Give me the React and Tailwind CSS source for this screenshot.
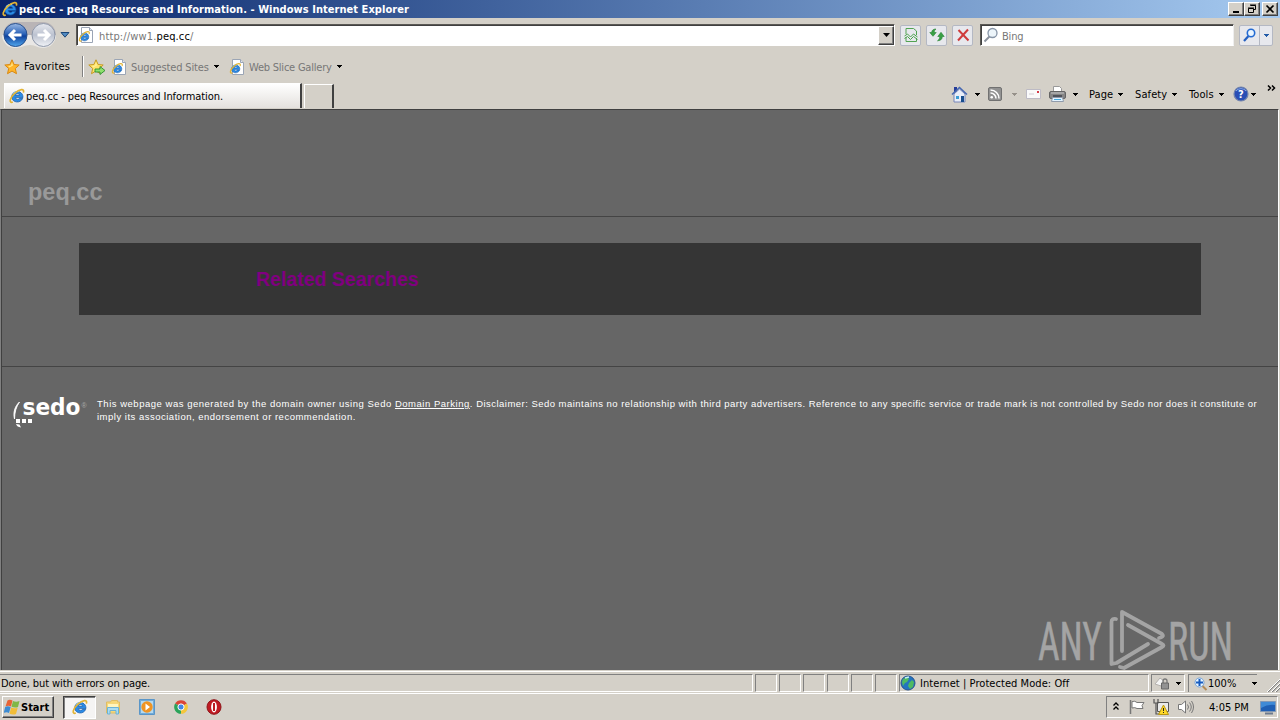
import clsx from "clsx";

const SUNKEN =
  "border border-t-[#808080] border-l-[#808080] border-b-white border-r-white";

function Caret({ className, color = "#000" }) {
  return (
    <svg
      className={clsx("h-[3px] w-[5px] shrink-0", className)}
      viewBox="0 0 5 3"
      shapeRendering="crispEdges"
    >
      <path d="M0 0h5v1H0zM1 1h3v1H1zM2 2h1v1H2z" fill={color} />
    </svg>
  );
}

function ExplorerMark() {
  return (
    <>
      <path
        d="M14 9.600H6.300c.3 2.200 3.300 2.300 4.300.7h3.100C11.800 15.800 2.800 15 2.800 8.800 2.800 1.700 14.300 1.500 14 9.600zM6.300 7.300h4.400c-.3-2.100-4-2.100-4.400 0z"
        fill="#2a8be6"
        stroke="#1457a6"
        strokeWidth=".7"
      />
      <path
        d="M4.200 6.200C5.200 4 8 3 10 3.600"
        fill="none"
        stroke="#8fd0fa"
        strokeWidth="1.200"
      />
      <path
        d="M3.800 14C-.3 15.600.6 9.800 5.600 5.300 10.500 1 16 .2 14.300 4.600"
        fill="none"
        stroke="#e2b436"
        strokeWidth="1.700"
      />
    </>
  );
}

function ExplorerIcon({ className }) {
  return (
    <svg className={clsx("shrink-0", className)} viewBox="0 0 16 16">
      <ExplorerMark />
    </svg>
  );
}

function ExplorerPage({ className }) {
  return (
    <svg
      className={clsx("h-4 w-4 shrink-0", className)}
      viewBox="0 0 16 16"
    >
      <path d="M3.500.5h8l3 3v12h-11z" fill="#fff" stroke="#9ba5b5" />
      <path d="M11.500.5v3h3" fill="#dfe5ef" stroke="#9ba5b5" />
      <g transform="translate(.5 3.500) scale(.74)">
        <ExplorerMark />
      </g>
    </svg>
  );
}

function Star({ add, className }) {
  return (
    <svg
      className={clsx("h-4 w-[18px] shrink-0", className)}
      viewBox="0 0 18 16"
    >
      <path
        d="M8 .8l2.100 4.700 5.100.5-3.900 3.500 1.200 5.200L8 12.100l-4.500 2.600 1.200-5.200L.8 6l5.100-.5z"
        fill={add ? "#ffe36b" : "#ffb52a"}
        stroke={add ? "#c69a23" : "#d98912"}
      />
      <path d="M8 3l1 3.500-3.500 2L4 7l3-.5z" fill="#fff2a0" opacity=".8" />
      {add && (
        <path
          d="M7 10h5V7.500l5 4-5 4V13H7z"
          fill="#8ee06c"
          stroke="#2e8f30"
          strokeWidth=".9"
        />
      )}
    </svg>
  );
}

function TravelButtons() {
  return (
    <svg className="h-[28px] w-[58px] shrink-0" viewBox="0 0 58 28">
      <defs>
        <linearGradient id="back" x2="0" y2="1">
          <stop stopColor="#9bb9e4" />
          <stop offset=".45" stopColor="#2c63b8" />
          <stop offset=".55" stopColor="#0f429d" />
          <stop offset="1" stopColor="#52a9ef" />
        </linearGradient>
        <linearGradient id="forward" x2="0" y2="1">
          <stop stopColor="#e6e8ee" />
          <stop offset=".5" stopColor="#bcc2d0" />
          <stop offset="1" stopColor="#f1f3f7" />
        </linearGradient>
      </defs>
      <path
        d="M14 1h29a13 13 0 0 1 12 13H2A13 13 0 0 1 14 1z"
        fill="#b9b4b6"
      />
      <path
        d="M1 14h54a13 13 0 0 1-13 13c-6 0-7-3-13-3s-8 3-15 3A13 13 0 0 1 1 14z"
        fill="#e9e7e5"
      />
      <circle cx="14.500" cy="14" r="11.500" fill="url(#back)" stroke="#274f8d" />
      <circle
        cx="42.500"
        cy="14"
        r="11.500"
        fill="url(#forward)"
        stroke="#8f98aa"
      />
      <path
        d="M8.500 14h12M14 9l-5 5 5 5"
        fill="none"
        stroke="#fff"
        strokeWidth="3"
      />
      <path
        d="M36.500 14h12M43 9l5 5-5 5"
        fill="none"
        stroke="#fff"
        strokeWidth="3"
      />
    </svg>
  );
}

function WindowButton({ children, className }) {
  return (
    <button
      type="button"
      className={clsx(
        "flex h-[14px] w-4 items-center justify-center border border-t-white border-l-white border-r-[#404040] border-b-[#404040] bg-[#d4d0c8] shadow-[inset_-1px_-1px_#808080]",
        className,
      )}
    >
      <svg
        className="h-3 w-3.5"
        viewBox="0 0 14 12"
        fill="none"
        stroke="#000"
      >
        {children}
      </svg>
    </button>
  );
}

function TitleBar() {
  return (
    <header className="flex h-[18px] items-center bg-linear-to-r from-[#0a246a] to-[#a6caf0] pl-[2px] pr-[2px]">
      <ExplorerIcon className="h-4 w-4" />
      <span className="ml-px mt-px w-[392px] text-[11px] font-bold tracking-[0.045px] text-white">
        peq.cc - peq Resources and Information. - Windows Internet Explorer
      </span>
      <div className="ml-auto flex">
        <WindowButton>
          <path d="M4 9h6" strokeWidth="2" />
        </WindowButton>
        <WindowButton>
          <path d="M5.500 2.500h5v4h-2M5 2h6M3.500 5.500h5v4h-5zM3 5h6" />
        </WindowButton>
        <WindowButton className="ml-[2px]">
          <path d="M3.500 2.500l7 7M10.500 2.500l-7 7" strokeWidth="1.700" />
        </WindowButton>
      </div>
    </header>
  );
}

function ToolButton({ children, className }) {
  return (
    <button
      type="button"
      className={clsx(
        "flex h-[21px] w-[21px] items-center justify-center rounded-[2px] border border-[#b4b8c3] bg-[#e7e8ed]",
        className,
      )}
    >
      <svg className="h-4 w-4" viewBox="0 0 16 16" fill="none">
        {children}
      </svg>
    </button>
  );
}

function AddressRow() {
  return (
    <div className="flex h-[34px] items-center pl-[1px]">
      <TravelButtons />
      <svg className="ml-[1px] h-[6px] w-[10px] shrink-0" viewBox="0 0 10 6">
        <path d="M1 .5h8l-4 4.700z" fill="#518bc2" stroke="#1d4778" />
      </svg>
      <div className="ml-[6px] flex h-[22px] w-[819px] items-center border border-t-[#5b5955] border-l-[#5b5955] border-b-white border-r-white bg-white shadow-[inset_1px_1px_#404040]">
        <ExplorerPage className="ml-px" />
        <span className="mt-[3px] ml-[5px] text-[11px] tracking-[0.14px] text-[#777]">
          http://ww1.<span className="text-black">peq.cc</span>/
        </span>
        <button
          type="button"
          className="ml-auto flex h-[19px] w-4 items-center justify-center border border-t-white border-l-white border-r-[#404040] border-b-[#404040] bg-[#d4d0c8] shadow-[inset_-1px_-1px_#808080]"
        >
          <svg className="h-[4px] w-[7px]" viewBox="0 0 7 4">
            <path d="M0 0h7L3.500 4z" />
          </svg>
        </button>
      </div>
      <ToolButton className="ml-[5px]">
        <path d="M3 7V1.500h7.500L13.500 4v4M3 10v4.500h10.500V11" stroke="#52a352" />
        <path
          d="M1.500 9l3-2 3 3 3-3 4 3M1.500 11.500l3-2 3 3 3-3 4 3"
          stroke="#49a24a"
        />
      </ToolButton>
      <ToolButton className="ml-[5px]">
        <path
          d="M.8 5.500L4 9.300l3.200-3.800H5.300C5.200 4 5.700 3 7 2 4.200 2 2.700 3.300 2.700 5.500zM15.200 9.500L12 5.300 8.800 9.500h1.900c0 2-.5 3-2.200 4.300 3.500-.2 4.800-1.800 4.800-4.300z"
          fill="#39a045"
          stroke="#24812f"
          strokeWidth=".6"
        />
      </ToolButton>
      <ToolButton className="ml-[5px]">
        <path
          d="M3.500 3l10 10.500M13 2.500L3 13.500"
          stroke="#cf3b3b"
          strokeWidth="2"
        />
      </ToolButton>
      <div className="ml-[7px] flex h-[22px] w-[254px] items-center border border-t-[#5b5955] border-l-[#5b5955] border-b-white border-r-[#eee] bg-white shadow-[inset_1px_1px_#404040]">
        <svg className="ml-[2px] h-4 w-4" viewBox="0 0 16 16" fill="none">
          <path d="M6.500 9.500l-5 5" stroke="#8b929d" strokeWidth="2" />
          <circle
            cx="9.500"
            cy="6"
            r="4.500"
            fill="#edf5fa"
            stroke="#8795a7"
            strokeWidth="1.300"
          />
        </svg>
        <span className="mt-[3px] ml-[3px] text-[11px] tracking-[-0.2px] text-[#777]">
          Bing
        </span>
      </div>
      <button
        type="button"
        className="ml-[5px] flex h-[21px] w-[34px] items-center rounded-[2px] border border-[#b4b8c3] bg-[#e7e8ed]"
      >
        <svg className="ml-[2px] h-4 w-4" viewBox="0 0 16 16" fill="none">
          <path d="M6.500 9l-4.500 5" stroke="#245fc0" strokeWidth="2.200" />
          <circle
            cx="9"
            cy="6"
            r="3.700"
            fill="#eaf5ff"
            stroke="#246bd3"
            strokeWidth="1.600"
          />
        </svg>
        <span className="ml-[1px] h-full w-px bg-[#b4b8c3]" />
        <Caret className="ml-[4px]" color="#235ba8" />
      </button>
    </div>
  );
}

function FavoritesRow() {
  return (
    <div className="flex h-[29px] items-center pl-[4px] text-[11px]">
      <Star />
      <span className="ml-[2px] w-[54px] shrink-0 tracking-[0.16px]">
        Favorites
      </span>
      <span className="ml-[4px] h-[21px] w-[2px] shrink-0 border-l border-l-[#808080] bg-white" />
      <Star add className="ml-[4px]" />
      <ExplorerPage className="ml-[5px]" />
      <span className="mt-[2px] ml-[4px] w-[79px] shrink-0 tracking-[-0.15px] text-[#777]">
        Suggested Sites
      </span>
      <Caret className="ml-[4px]" />
      <ExplorerPage className="ml-[10px]" />
      <span className="mt-[2px] ml-[4px] w-[84px] shrink-0 tracking-[-0.22px] text-[#777]">
        Web Slice Gallery
      </span>
      <Caret className="ml-[4px]" />
    </div>
  );
}

function CommandBar() {
  return (
    <div className="ml-auto flex h-[26px] items-center pr-[4px] text-[11px]">
      <svg className="h-[17px] w-[17px]" viewBox="0 0 17 17">
        <path d="M3 1h3v5H3z" fill="#263c99" />
        <path d="M3 8l5.500-5L14 8v8H3z" fill="#e9eef9" stroke="#7685b8" />
        <path
          d="M1 8.500l7.500-7 7.500 7"
          fill="none"
          stroke="#4467b2"
          strokeWidth="1.500"
        />
        <path d="M10 10h3v6h-3z" fill="#174d8d" />
        <path d="M5 10h3v3H5z" fill="#3b9ed5" />
      </svg>
      <Caret className="ml-[7px]" />
      <svg
        className="ml-[8px] h-[14px] w-[14px]"
        viewBox="0 0 14 14"
        fill="none"
      >
        <rect
          x=".5"
          y=".5"
          width="13"
          height="13"
          rx="1.500"
          fill="#929292"
          stroke="#717171"
        />
        <circle cx="3.700" cy="10.300" r="1.300" fill="#fff" />
        <path
          d="M2.500 6a5.500 5.500 0 0 1 5.500 5.500M2.500 3a8.500 8.500 0 0 1 8.500 8.500"
          stroke="#fff"
          strokeWidth="1.500"
        />
      </svg>
      <Caret className="ml-[10px]" color="#96918a" />
      <svg className="ml-[9px] h-[10px] w-[15px]" viewBox="0 0 15 10">
        <path d="M.5.5h14v9H.5z" fill="#fafafa" stroke="#bdbbc5" />
        <path d="M11 2h2v2h-2z" fill="#d53b48" />
        <path d="M3 5h5" stroke="#d0cad1" />
      </svg>
      <svg className="ml-[8px] h-4 w-[17px]" viewBox="0 0 17 16">
        <path d="M4.500 7V.5h6l2 2V7" fill="#fff" stroke="#999" />
        <rect
          x=".5"
          y="5.500"
          width="16"
          height="7"
          rx="1.500"
          fill="#858585"
          stroke="#646464"
        />
        <path d="M2 7h13" stroke="#c8c8c8" />
        <path d="M4 9h9v4H4z" fill="#50535a" />
        <path d="M3.500 11.500h10l1 4h-12z" fill="#e3f3ff" stroke="#909bab" />
        <path d="M5 13.500h7" stroke="#45a9dc" />
      </svg>
      <Caret className="ml-[7px]" />
      <span className="mt-[2px] ml-[11px] w-[25px] tracking-[0.1px]">Page</span>
      <Caret className="ml-[4px]" />
      <span className="mt-[2px] ml-[12px] w-[33px] tracking-[0.1px]">
        Safety
      </span>
      <Caret className="ml-[4px]" />
      <span className="mt-[2px] ml-[12px] w-[27px] tracking-[0.1px]">
        Tools
      </span>
      <Caret className="ml-[3px]" />
      <svg className="ml-[9px] h-4 w-4" viewBox="0 0 16 16">
        <circle
          cx="8"
          cy="8"
          r="7"
          fill="#294eb5"
          stroke="#7384ac"
          strokeWidth="1.200"
        />
        <path d="M3 5a5.500 4 0 0 1 10 0" fill="none" stroke="#8cade7" />
        <text x="5" y="12.300" fill="#fff" fontSize="11" fontWeight="bold">
          ?
        </text>
      </svg>
      <Caret className="ml-[2px]" />
      <svg
        className="-mt-[13px] ml-[11px] h-[6px] w-[9px]"
        viewBox="0 0 9 6"
        fill="none"
        stroke="#000"
        strokeWidth="1.500"
      >
        <path d="M1 .5L3.500 3 1 5.500M5 .5L7.500 3 5 5.500" />
      </svg>
    </div>
  );
}

function TabRow() {
  return (
    <div className="flex h-[28px] items-start pl-[4px]">
      <div className="mt-[2px] flex h-[25px] w-[298px] items-center border-r-2 border-r-[#404040] border-t border-t-white border-l border-l-white bg-linear-to-b from-white to-[#e4e1dd] pl-[4px] text-[11px]">
        <ExplorerIcon className="h-4 w-4" />
        <span className="ml-px mt-px tracking-[-0.08px]">
          peq.cc - peq Resources and Information.
        </span>
      </div>
      <div className="mt-[3px] ml-[2px] h-[24px] w-[30px] border-t border-l border-r-2 border-t-white border-l-white border-r-[#404040]" />
      <CommandBar />
    </div>
  );
}

function SedoLogo() {
  return (
    <svg
      className="h-[34px] w-[76px] shrink-0 overflow-visible"
      viewBox="0 0 76 34"
    >
      <path
        d="M7.500 7C2.500 11.500 1 18 2.500 24c.1-7 1.600-12 5-17z"
        fill="#fff"
        stroke="#fff"
        strokeWidth=".9"
      />
      <text
        x="10.500"
        y="20"
        fill="#fff"
        fontFamily="'DejaVu Sans', sans-serif"
        fontSize="23"
        fontWeight="bold"
        textLength="58"
        lengthAdjust="spacingAndGlyphs"
      >
        sedo
      </text>
      <text x="69.500" y="13" fill="#aaa" fontSize="7">
        ®
      </text>
      <path
        d="M4 24h4v4H4zM10 24h4v4h-4zM16 24h4v4h-4zM4 29l3.500.5L9 32.500C6.500 32.200 4.500 31 4 29z"
        fill="#fff"
      />
    </svg>
  );
}

function WebPage() {
  return (
    <main className="h-[561px] w-[1279px] border-t border-r border-l border-t-[#404040] border-l-[#808080] border-r-white bg-[#666] font-['Liberation_Sans',sans-serif]">
      <div className="h-full border-l border-l-[#404040]">
        <div className="flex h-[107px] items-end border-b border-b-[#444] pb-[10px] pl-[26px]">
          <h1 className="text-[23.500px] leading-[28px] font-bold text-[#999]">
            peq.cc
          </h1>
        </div>
        <div className="flex h-[150px] items-start border-b border-b-[#444] pt-[26px] pl-[77px]">
          <div className="flex h-[72px] w-[1122px] items-center bg-[#353535] pl-[177px]">
            <h2 className="text-[19.500px] font-bold text-[#800080]">
              Related Searches
            </h2>
          </div>
        </div>
        <footer className="flex pt-[28px] pl-[10px]">
          <SedoLogo />
          <p className="ml-[9px] pt-[2px] text-[9.500px] leading-[13px] tracking-[0.5px] text-white">
            <span className="tracking-[0.52px]">
              This webpage was generated by the domain owner using Sedo{" "}
              <a className="underline">Domain Parking</a>.{" "}
            </span>
            <span className="tracking-[0.47px]">
              Disclaimer: Sedo maintains no relationship with third party
              advertisers.{" "}
            </span>
            <span className="tracking-[0.42px]">
              Reference to any specific service or trade mark is not controlled
              by Sedo nor does it constitute or
            </span>
            <br />
            imply its association, endorsement or recommendation.
          </p>
        </footer>
      </div>
    </main>
  );
}

function Watermark() {
  return (
    <svg
      className="pointer-events-none absolute top-[608px] left-[1036px] h-[66px] w-[204px] overflow-visible"
      viewBox="0 0 204 66"
      fill="none"
      opacity=".75"
    >
      <g
        fill="#b9b9b9"
        stroke="#b9b9b9"
        strokeWidth=".5"
        fontFamily="Roboto, sans-serif"
        fontSize="53"
      >
        <text x="2" y="52" textLength="64" lengthAdjust="spacingAndGlyphs">
          ANY
        </text>
        <text x="132" y="52" textLength="65" lengthAdjust="spacingAndGlyphs">
          RUN
        </text>
      </g>
      <g
        stroke="#b9b9b9"
        strokeWidth="3.800"
        strokeLinejoin="round"
        strokeLinecap="round"
      >
        <path d="M80 11c-3-.5-4.500.5-4.500 3v42l5-1L112 36" />
        <path d="M86 43V4l40 22c2 2 0 3.500-3 4" />
        <path d="M92 17l34 19c2 1 2 2 0 3L88 60l-4-1" />
      </g>
    </svg>
  );
}

function StatusBar() {
  return (
    <div className="flex h-[23px] items-start border-t border-b border-white pt-[2px] text-[11px]">
      <div className="flex h-[18px] w-[753px] items-center border-t border-r border-b border-t-[#808080] border-r-white border-b-white pl-px">
        <span className="mt-[2px] tracking-[-0.08px]">
          Done, but with errors on page.
        </span>
      </div>
      <div className="ml-[2px] flex gap-[2px]">
        {[0, 1, 2, 3, 4, 5].map((cell) => (
          <div key={cell} className={clsx("h-[18px] w-[22px]", SUNKEN)} />
        ))}
      </div>
      <div
        className={clsx("ml-[2px] flex h-[18px] w-[250px] items-center", SUNKEN)}
      >
        <svg className="h-4 w-4" viewBox="0 0 16 16">
          <circle cx="8" cy="8" r="7" fill="#2374bf" stroke="#28528f" />
          <path
            d="M3 4l4-2 2 2-2 3-2 1-2 3-1-4zM9 8l3-3 2 2-1 5-3 2-2-3z"
            fill="#4fba62"
          />
          <path d="M5 3l4-1" stroke="#c5f1f1" strokeWidth="1.500" />
        </svg>
        <span className="mt-[2px] ml-[4px] tracking-[0.06px]">
          Internet | Protected Mode: Off
        </span>
      </div>
      <div
        className={clsx("ml-[2px] flex h-[18px] w-[34px] items-center", SUNKEN)}
      >
        <svg className="ml-[2px] h-[14px] w-4" viewBox="0 0 16 14">
          <path d="M1 8l5-6 4 3-3 5z" fill="#f4f4f4" stroke="#b4b1ae" />
          <path
            d="M9 7V5a2 2 0 0 1 4 0v2"
            fill="none"
            stroke="#777"
            strokeWidth="1.300"
          />
          <path d="M7.500 7h7v6h-7z" fill="#929292" stroke="#686868" />
        </svg>
        <Caret className="ml-[6px]" />
      </div>
      <div className="ml-[3px] flex h-[18px] items-center border-t border-l border-[#808080] pl-[5px]">
        <svg className="h-[14px] w-[14px]" viewBox="0 0 14 14" fill="none">
          <path d="M8.500 9l4 4" stroke="#b48c58" strokeWidth="2" />
          <circle cx="5.500" cy="5.500" r="4.500" fill="#e8f6ff" stroke="#75a1d6" />
          <path d="M2 5.500h7M5.500 2v7" stroke="#175bc0" strokeWidth="2" />
        </svg>
        <span className="w-[30px]">100%</span>
        <Caret className="ml-[14px]" />
      </div>
      <svg className="mt-[4px] ml-auto h-[14px] w-[14px]" viewBox="0 0 14 14">
        <path
          d="M2 14L14 2M6 14l8-8M10 14l4-4"
          stroke="#808080"
          strokeWidth="1.200"
        />
        <path d="M1 14L14 1M5 14l9-9M9 14l5-5" stroke="#fff" />
      </svg>
    </div>
  );
}

function TaskbarIcons() {
  return (
    <>
      <svg className="ml-[9px] h-4 w-4" viewBox="0 0 16 16">
        <path
          d="M1.500 3h4l1-1.500h6V3h2v11h-13z"
          fill="#f6d779"
          stroke="#dfbd66"
        />
        <path d="M3 5h10v4H3z" fill="#fff4bd" />
        <path
          d="M2.500 15V8.500h11V15h-2.500v-3.500h-6V15z"
          fill="#a9dcf2"
          stroke="#6bb2d6"
        />
      </svg>
      <svg className="ml-[18px] h-4 w-4" viewBox="0 0 16 16">
        <path d="M.5.500h15v15H.5z" fill="#71abd8" stroke="#5a96c8" />
        <path d="M2 2h12v12H2z" fill="#b4d9f0" />
        <circle cx="8" cy="8" r="5.700" fill="#ef9423" />
        <path d="M6.500 4.500L11 8l-4.500 3.500z" fill="#fff" />
      </svg>
      <svg className="ml-[19px] h-[14px] w-[14px]" viewBox="1 1 14 14">
        <path d="M8 8L2.100 4.600a6.800 6.800 0 0 1 11.800 0z" fill="#db4437" />
        <path d="M8 8l5.900-3.400A6.800 6.800 0 0 1 8 14.800z" fill="#f4c63c" />
        <path d="M8 8v6.800A6.800 6.800 0 0 1 2.100 4.600z" fill="#2ba35a" />
        <circle cx="8" cy="8" r="3.100" fill="#4387e6" stroke="#fff" />
      </svg>
      <svg className="ml-[18px] h-4 w-4" viewBox="0 0 16 16">
        <ellipse
          cx="8"
          cy="8"
          rx="7"
          ry="7.300"
          fill="#c01b23"
          stroke="#8f1419"
        />
        <ellipse cx="8" cy="8" rx="2.900" ry="5.400" fill="#fff" />
        <path d="M8 4v8" stroke="#bd1d23" strokeWidth="2" />
      </svg>
    </>
  );
}

function Taskbar() {
  return (
    <div className="flex h-[26px] items-center pl-[2px] pr-[2px]">
      <button
        type="button"
        className="flex h-[22px] w-[52px] items-center border border-t-white border-l-white border-r-[#404040] border-b-[#404040] pl-px shadow-[inset_-1px_-1px_#808080]"
      >
        <svg className="h-4 w-4 shrink-0" viewBox="0 0 16 16">
          <path
            d="M3.500 1.500q2-1.500 5 0L7 7.500Q4.500 6 1.500 7.500z"
            fill="#e66335"
          />
          <path d="M9 2q3 1.500 6.500 0L14 8q-3 1.200-6.500-.3z" fill="#80b746" />
          <path
            d="M1.200 8q2.500-1.300 5.500 0L5 14Q2.500 12.500-.3 14z"
            fill="#3c8bd2"
          />
          <path
            d="M7.200 8.500q3 1.500 6.500.3L12 15q-3 1.300-6.500-.2z"
            fill="#f2bd37"
          />
        </svg>
        <span className="ml-px mt-px text-[11px] font-bold">Start</span>
      </button>
      <div className="ml-[9px] flex h-[23px] w-[33px] items-center justify-center border border-t-[#404040] border-l-[#404040] border-b-white border-r-white bg-[#f5f4f3] shadow-[inset_1px_1px_#808080]">
        <ExplorerIcon className="h-4 w-4" />
      </div>
      <TaskbarIcons />
      <div
        className={clsx(
          "ml-auto flex h-[22px] w-[172px] items-center pl-[6px]",
          SUNKEN,
        )}
      >
        <svg
          className="-mt-[3px] h-[8px] w-[6px]"
          viewBox="0 0 6 8"
          fill="none"
          stroke="#000"
          strokeWidth="1.300"
        >
          <path d="M.5 3.500L3 1l2.500 2.500M.5 7.500L3 5l2.500 2.500" />
        </svg>
        <svg className="ml-[10px] h-4 w-[17px]" viewBox="0 0 17 16">
          <path d="M1.500 1v14" stroke="#777" strokeWidth="1.500" />
          <path
            d="M3 2.500q3-1 5 1h7l-2 3 1 3H8q-2-1.500-5-.500z"
            fill="#fff"
            stroke="#777"
          />
        </svg>
        <svg className="ml-[7px] h-4 w-4" viewBox="0 0 16 16">
          <path d="M4.500 3.500h11v9h-11z" fill="#e9e9e9" stroke="#555" />
          <path
            d="M1 0v4h4V0M3 4v11h4"
            fill="none"
            stroke="#555"
            strokeWidth="1.200"
          />
          <path d="M10.500 6l5 9.500h-10z" fill="#ffd928" stroke="#b99612" />
          <path d="M10.500 9v3M10.500 13v1" stroke="#222" />
        </svg>
        <svg
          className="ml-[8px] h-4 w-[17px]"
          viewBox="0 0 17 16"
          fill="none"
          stroke="#777"
        >
          <path d="M1.500 5.500h3L8.500 2v12l-4-3.500h-3z" fill="#fff" />
          <path d="M10.500 5.500q2 2.500 0 5M12.500 3.500q3.500 4.500 0 9M14.500 2q4 6 0 12" />
        </svg>
        <span className="mt-px ml-[15px] w-[43px] text-[11px]">4:05 PM</span>
        <svg
          className="ml-[8px] h-[15px] w-[17px] shrink-0"
          viewBox="0 0 17 15"
        >
          <path d="M.5 1.500h15v10H.5z" fill="#1f5fb4" stroke="#8298b5" />
          <path d="M1 2h14v3Q8 4 1 8z" fill="#3f8ad6" />
          <path d="M5 13.500h8" stroke="#6c7a8e" strokeWidth="2" />
        </svg>
      </div>
    </div>
  );
}

export default function App() {
  return (
    <div className="relative flex h-[720px] w-[1280px] flex-col overflow-hidden bg-[#d4d0c8] font-['DejaVu_Sans_Condensed','DejaVu_Sans',sans-serif] leading-[14px] font-stretch-condensed whitespace-nowrap text-black">
      <TitleBar />
      <AddressRow />
      <FavoritesRow />
      <TabRow />
      <WebPage />
      <div className="h-px" />
      <StatusBar />
      <Taskbar />
      <Watermark />
    </div>
  );
}
